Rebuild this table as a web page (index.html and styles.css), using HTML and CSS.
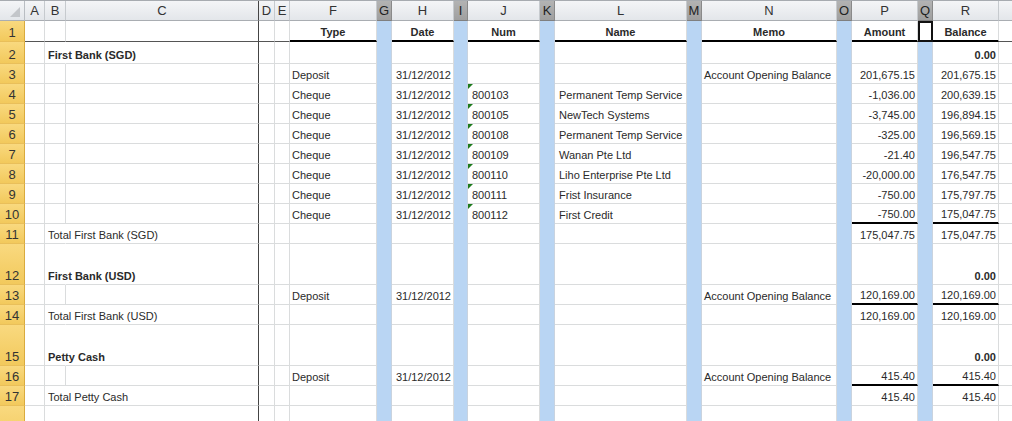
FILE: index.html
```html
<!DOCTYPE html>
<html>
<head>
<meta charset="utf-8">
<title>Sheet</title>
<link rel="stylesheet" href="styles.css">
</head>
<body>
<div class="sheet">
  <div class="r hdr">
    <div class="corner"></div><div>A</div><div>B</div><div>C</div><div>D</div><div>E</div><div>F</div><div>G</div><div>H</div><div>I</div><div>J</div><div>K</div><div>L</div><div>M</div><div>N</div><div>O</div><div>P</div><div>Q</div><div>R</div><div></div>
  </div>
  <div class="r row1 h21">
    <div>1</div><div></div><div></div><div></div><div></div><div></div><div class="c bb">Type</div><div></div><div class="c bb">Date</div><div></div><div class="c bb">Num</div><div></div><div class="c bb">Name</div><div></div><div class="c bb">Memo</div><div></div><div class="c bb">Amount</div><div class="act"></div><div class="c bb">Balance</div><div></div>
  </div>
  <div class="r h22">
    <div>2</div><div></div><div class="ov b">First Bank (SGD)</div><div></div><div></div><div></div><div></div><div></div><div></div><div></div><div></div><div></div><div></div><div></div><div></div><div></div><div></div><div></div><div class="n b">0.00</div><div></div>
  </div>
  <div class="r">
    <div>3</div><div></div><div></div><div></div><div></div><div></div><div>Deposit</div><div></div><div class="n">31/12/2012</div><div></div><div class="pl"></div><div></div><div class="pl"></div><div></div><div>Account Opening Balance</div><div></div><div class="n">201,675.15</div><div></div><div class="n">201,675.15</div><div></div>
  </div>
  <div class="r">
    <div>4</div><div></div><div></div><div></div><div></div><div></div><div>Cheque</div><div></div><div class="n">31/12/2012</div><div></div><div class="pl tri">800103</div><div></div><div class="pl">Permanent Temp Service</div><div></div><div></div><div></div><div class="n">-1,036.00</div><div></div><div class="n">200,639.15</div><div></div>
  </div>
  <div class="r">
    <div>5</div><div></div><div></div><div></div><div></div><div></div><div>Cheque</div><div></div><div class="n">31/12/2012</div><div></div><div class="pl tri">800105</div><div></div><div class="pl">NewTech Systems</div><div></div><div></div><div></div><div class="n">-3,745.00</div><div></div><div class="n">196,894.15</div><div></div>
  </div>
  <div class="r">
    <div>6</div><div></div><div></div><div></div><div></div><div></div><div>Cheque</div><div></div><div class="n">31/12/2012</div><div></div><div class="pl tri">800108</div><div></div><div class="pl">Permanent Temp Service</div><div></div><div></div><div></div><div class="n">-325.00</div><div></div><div class="n">196,569.15</div><div></div>
  </div>
  <div class="r">
    <div>7</div><div></div><div></div><div></div><div></div><div></div><div>Cheque</div><div></div><div class="n">31/12/2012</div><div></div><div class="pl tri">800109</div><div></div><div class="pl">Wanan Pte Ltd</div><div></div><div></div><div></div><div class="n">-21.40</div><div></div><div class="n">196,547.75</div><div></div>
  </div>
  <div class="r">
    <div>8</div><div></div><div></div><div></div><div></div><div></div><div>Cheque</div><div></div><div class="n">31/12/2012</div><div></div><div class="pl tri">800110</div><div></div><div class="pl">Liho Enterprise Pte Ltd</div><div></div><div></div><div></div><div class="n">-20,000.00</div><div></div><div class="n">176,547.75</div><div></div>
  </div>
  <div class="r">
    <div>9</div><div></div><div></div><div></div><div></div><div></div><div>Cheque</div><div></div><div class="n">31/12/2012</div><div></div><div class="pl tri">800111</div><div></div><div class="pl">Frist Insurance</div><div></div><div></div><div></div><div class="n">-750.00</div><div></div><div class="n">175,797.75</div><div></div>
  </div>
  <div class="r">
    <div>10</div><div></div><div></div><div></div><div></div><div></div><div>Cheque</div><div></div><div class="n">31/12/2012</div><div></div><div class="pl tri">800112</div><div></div><div class="pl">First Credit</div><div></div><div></div><div></div><div class="n bb">-750.00</div><div></div><div class="n bb">175,047.75</div><div></div>
  </div>
  <div class="r">
    <div>11</div><div></div><div class="ov">Total First Bank (SGD)</div><div></div><div></div><div></div><div></div><div></div><div></div><div></div><div></div><div></div><div></div><div></div><div></div><div></div><div class="n">175,047.75</div><div></div><div class="n">175,047.75</div><div></div>
  </div>
  <div class="r h41">
    <div>12</div><div></div><div class="ov b">First Bank (USD)</div><div></div><div></div><div></div><div></div><div></div><div></div><div></div><div></div><div></div><div></div><div></div><div></div><div></div><div></div><div></div><div class="n b">0.00</div><div></div>
  </div>
  <div class="r">
    <div>13</div><div></div><div></div><div></div><div></div><div></div><div>Deposit</div><div></div><div class="n">31/12/2012</div><div></div><div class="pl"></div><div></div><div class="pl"></div><div></div><div>Account Opening Balance</div><div></div><div class="n bb">120,169.00</div><div></div><div class="n bb">120,169.00</div><div></div>
  </div>
  <div class="r">
    <div>14</div><div></div><div class="ov">Total First Bank (USD)</div><div></div><div></div><div></div><div></div><div></div><div></div><div></div><div></div><div></div><div></div><div></div><div></div><div></div><div class="n">120,169.00</div><div></div><div class="n">120,169.00</div><div></div>
  </div>
  <div class="r h41">
    <div>15</div><div></div><div class="ov b">Petty Cash</div><div></div><div></div><div></div><div></div><div></div><div></div><div></div><div></div><div></div><div></div><div></div><div></div><div></div><div></div><div></div><div class="n b">0.00</div><div></div>
  </div>
  <div class="r">
    <div>16</div><div></div><div></div><div></div><div></div><div></div><div>Deposit</div><div></div><div class="n">31/12/2012</div><div></div><div class="pl"></div><div></div><div class="pl"></div><div></div><div>Account Opening Balance</div><div></div><div class="n bb">415.40</div><div></div><div class="n bb">415.40</div><div></div>
  </div>
  <div class="r">
    <div>17</div><div></div><div class="ov">Total Petty Cash</div><div></div><div></div><div></div><div></div><div></div><div></div><div></div><div></div><div></div><div></div><div></div><div></div><div></div><div class="n">415.40</div><div></div><div class="n">415.40</div><div></div>
  </div>
  <div class="r h41">
    <div></div><div></div><div class="ov"></div><div></div><div></div><div></div><div></div><div></div><div></div><div></div><div></div><div></div><div></div><div></div><div></div><div></div><div></div><div></div><div></div><div></div>
  </div>
</div>
</body>
</html>
```

FILE: styles.css
```css
html, body {
  margin: 0;
  padding: 0;
  background: #fff;
  overflow: hidden;
}
body {
  font-family: "Liberation Sans", Arial, sans-serif;
  font-size: 11px;
  color: #2a2a2a;
}
.sheet {
  width: 1012px;
  height: 421px;
  overflow: hidden;
}
.r {
  display: grid;
  grid-template-columns: 25px 20px 21px 193px 16px 15px 87px 15px 62px 14px 72px 15px 132px 15px 135px 15px 66px 15px 66px 80px;
  height: 20px;
  width: 1079px;
}
.r.h21 { height: 21px; }
.r.h22 { height: 22px; }
.r.h41 { height: 41px; }
.r > div {
  box-sizing: border-box;
  border-right: 1px solid #dadcdd;
  border-bottom: 1px solid #dadcdd;
  display: flex;
  align-items: flex-end;
  padding: 0 2px 1px 2px;
  line-height: 13px;
  white-space: nowrap;
  min-width: 0;
}
.r > .n { justify-content: flex-end; }
.r > .c { justify-content: center; }
.r > .b { font-weight: bold; }
.r > .pl { padding-left: 4px; }
.r > .ov { border-right-color: transparent; padding-left: 3px; }
.r > .bb { border-bottom: 2px solid #000; }
.r > .tri { position: relative; }
.r > .tri::before {
  content: "";
  position: absolute;
  left: 0;
  top: 0;
  border-top: 5px solid #1d7a1d;
  border-right: 5px solid transparent;
}
.row1 > div { font-weight: bold; border-bottom-color: #555; }
.sheet .r > div:first-child {
  background: linear-gradient(#f9d97f, #f2c95c);
  border-right: 1px solid #d9ab3e;
  border-bottom: 1px solid #e9bf5a;
  justify-content: center;
  font-size: 13px;
  line-height: 15px;
  color: #333;
  font-weight: normal;
}
.sheet .r > div:nth-child(4) { border-right: 1px solid #444; }
.sheet .r > div:nth-child(2n+8):nth-child(-n+18) {
  background: #b9d5f3;
  border-bottom-color: #b9d5f3;
  border-right-color: #c9d3df;
}
.sheet .r.row1 > div.act:nth-child(18) {
  background: #fff;
  border: 2px solid #111;
}
.sheet .hdr {
  height: 21px;
  box-sizing: border-box;
  border-top: 1px solid #a7abb0;
}
.sheet .hdr > div {
  background: linear-gradient(#f4f5f7, #e3e6ea);
  border-right: 1px solid #c6cace;
  border-bottom: 1px solid #a9adb2;
  justify-content: center;
  align-items: center;
  padding: 0;
  font-size: 13px;
  line-height: 15px;
  color: #333;
}
.sheet .hdr > div:nth-child(2n+8):nth-child(-n+18) {
  background: linear-gradient(#b3b3b3, #9f9f9f);
  border-right-color: #8a8a8a;
  border-bottom-color: #7f7f7f;
  color: #222;
}
.sheet .hdr > div.corner {
  background: linear-gradient(#f4f5f7, #e3e6ea);
  border-right: 1px solid #b9bdc2;
  border-bottom: 1px solid #a9adb2;
  position: relative;
}
.sheet .hdr > div.corner::after {
  content: "";
  position: absolute;
  right: 4px;
  bottom: 3px;
  border-left: 10px solid transparent;
  border-bottom: 10px solid #c3c6ca;
}
```
